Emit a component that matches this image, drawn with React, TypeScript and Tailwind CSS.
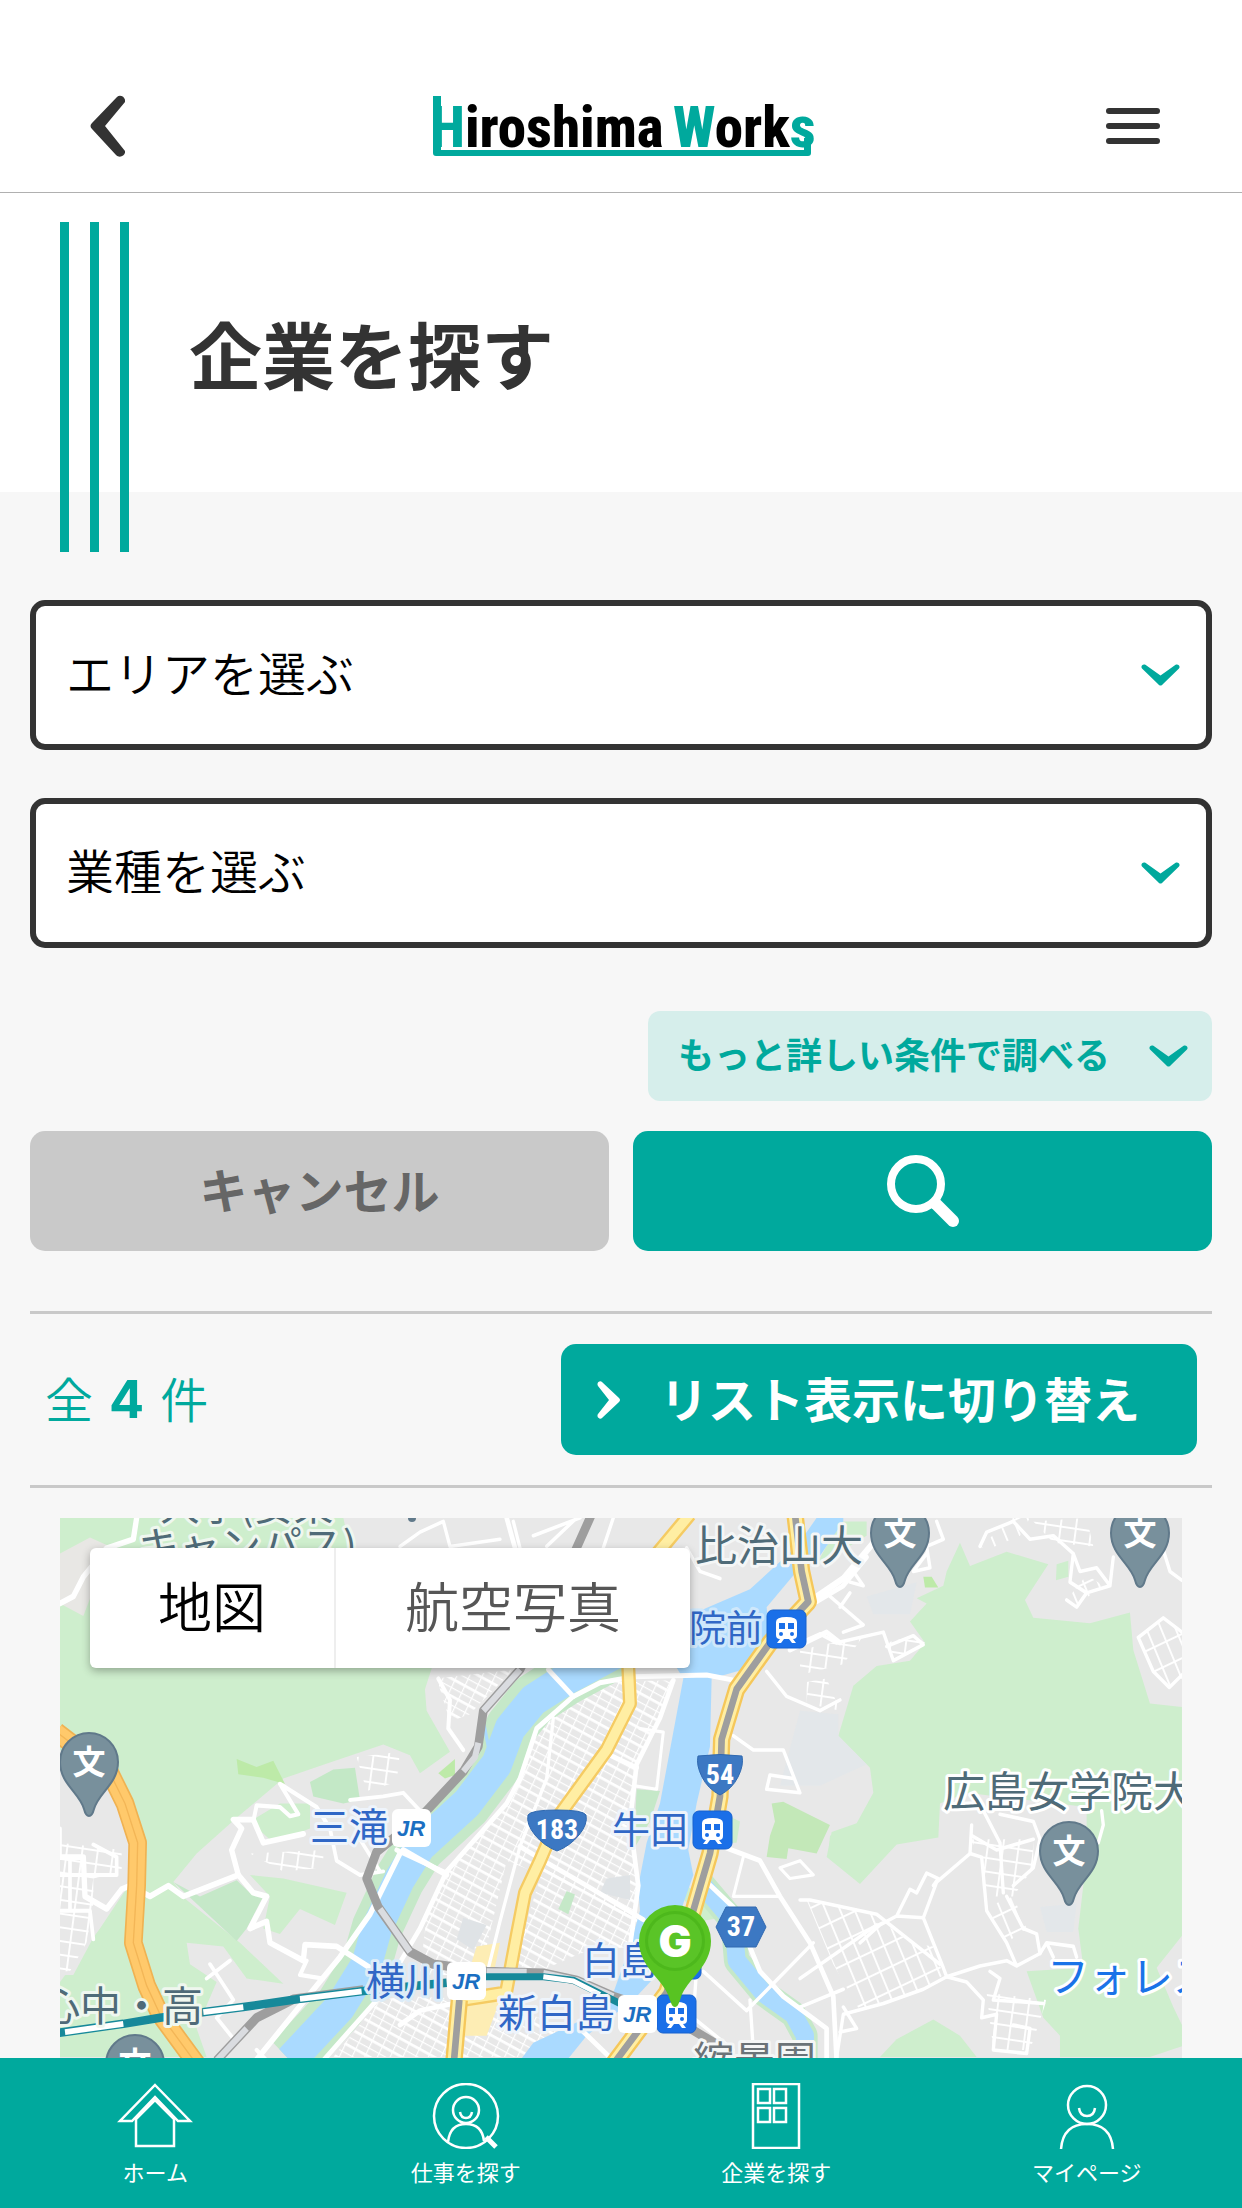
import { useState, type ReactNode } from "react";
import clsx from "clsx";

function Chevron({ className }: { className?: string }) {
    return (
        <svg viewBox="0 0 39 22" className={className} fill="currentColor" aria-hidden="true">
            <path d="M1 4.4C-.6 2.6 1.6-.6 4.4.8L19.5 11.6 34.6.8c2.8-1.4 5 1.8 3.4 3.6L21 20.9c-1 .9-2 .9-3 0Z" />
        </svg>
    );
}

function Logo() {
    return (
        <svg viewBox="0 0 378 60" className="w-[378px] h-[60px] overflow-visible" role="img" aria-label="Hiroshima Works">
            <g
                fontFamily="'Roboto Condensed', 'Liberation Sans Narrow', 'Liberation Sans', sans-serif"
                fontWeight="800"
                fontSize="57"
            >
                <text x="-3" y="51">
                    <tspan fill="#00a99d">H</tspan>
                    <tspan fill="#000">iroshima</tspan>
                </text>
                <text x="240" y="51">
                    <tspan fill="#00a99d">W</tspan>
                    <tspan fill="#000">ork</tspan>
                    <tspan fill="#00a99d">s</tspan>
                </text>
            </g>
            <path d="M0 0H8V54H371V42H378V57Q378 60 375 60H3Q0 60 0 57Z" fill="#00a99d" />
        </svg>
    );
}

function SelectBox({ id, label, options }: { id: string; label: string; options: string[] }) {
    return (
        <div className="relative">
            <label htmlFor={id} className="sr-only">{label}</label>
            <select
                id={id}
                className="block w-full h-[150px] appearance-none rounded-[15px] border-[6px] border-[#333] bg-white pl-[30px] pr-20 pb-2 text-5xl font-[350] text-black"
            >
                <option value="">{label}</option>
                {options.map((o) => (
                    <option key={o}>{o}</option>
                ))}
            </select>
            <Chevron className="pointer-events-none absolute right-8 top-16 w-[39px] text-[#00a99d]" />
        </div>
    );
}

/* ---------- map ---------- */

function SchoolPin({ x, y }: { x: number; y: number }) {
    return (
        <g transform={`translate(${x} ${y})`}>
            <path
                d="M0 54C-3 54-4 51-5 47C-9 31-29 22-29 0A29 29 0 0 1 29 0C29 22 9 31 5 47C4 51 3 54 0 54Z"
                fill="#78909c"
                stroke="#60798a"
                strokeWidth="2"
            />
            <text y="12" textAnchor="middle" fontSize="33" fontWeight="700" fill="#fff">文</text>
        </g>
    );
}

function TrainIcon({ x, y }: { x: number; y: number }) {
    return (
        <g transform={`translate(${x} ${y})`}>
            <rect width="39" height="38" rx="6" fill="#1a6fe8" stroke="#1662cf" />
            <path d="M9 12Q9 7 19.500 7T30 12V25Q30 29 26 29L29 33H25L22 29H17L14 33H10L13 29Q9 29 9 25Z" fill="#fff" />
            <path d="M12 13H18V19H12ZM21 13H27V19H21Z" fill="#1a6fe8" />
            <circle cx="14" cy="24" r="2" fill="#1a6fe8" />
            <circle cx="25" cy="24" r="2" fill="#1a6fe8" />
        </g>
    );
}

function JrIcon({ x, y }: { x: number; y: number }) {
    return (
        <g transform={`translate(${x} ${y})`}>
            <rect width="39" height="38" rx="6" fill="#fff" />
            <text
                x="19"
                y="27"
                textAnchor="middle"
                fontFamily="'Liberation Sans', sans-serif"
                fontStyle="italic"
                fontWeight="700"
                fontSize="22"
                fill="#1b6fc2"
            >
                JR
            </text>
        </g>
    );
}

function RouteBadge({ x, y, no, d }: { x: number; y: number; no: string; d: string }) {
    return (
        <g transform={`translate(${x} ${y})`}>
            <path d={d} fill="#3c78c3" stroke="#3069b0" strokeWidth="1" />
            <text
                y="9"
                textAnchor="middle"
                fontFamily="'Roboto Condensed', Roboto, sans-serif"
                fontWeight="700"
                fontSize="28"
                fill="#fff"
            >
                {no}
            </text>
        </g>
    );
}

const labels = [
    { x: 100, y: 2, size: 40, fill: "#4f6b78", halo: "#eff7ef", text: "大学(安東" },
    { x: 78, y: 43, size: 41, fill: "#4f6b78", halo: "#eff7ef", text: "キャンパス)" },
    { x: 635, y: 43, size: 42, fill: "#4f6b78", halo: "#f4f6f6", text: "比治山大" },
    { x: 629, y: 124, size: 37, fill: "#3067c6", halo: "#cfe8fb", text: "院前" },
    { x: 552, y: 325, size: 38, fill: "#3067c6", halo: "#eef4fb", text: "牛田" },
    { x: 250, y: 323, size: 39, fill: "#3067c6", halo: "#eef4fb", text: "三滝" },
    { x: 306, y: 477, size: 39, fill: "#3067c6", halo: "#dcecf8", text: "横川" },
    { x: 522, y: 456, size: 38, fill: "#3067c6", halo: "#eef4fb", text: "白島" },
    { x: 438, y: 509, size: 39, fill: "#3067c6", halo: "#eef4fb", text: "新白島" },
    { x: 883, y: 289, size: 42, fill: "#4f6b78", halo: "#fff", text: "広島女学院大" },
    { x: 987, y: 474, size: 42, fill: "#1a73e8", halo: "#fff", text: "フォレスト" },
    { x: 633, y: 558, size: 41, fill: "#6b7378", halo: "#f4f6f6", text: "縮景園" },
    { x: -21, y: 503, size: 41, fill: "#4f6b78", halo: "#eff7ef", text: "心中・高" },
];

const shield54 = "M-22 -19Q0 -22 22 -19Q24 -10 18 2Q12 14 0 20Q-12 14 -18 2Q-24 -10 -22 -19Z";
const shield183 = "M-29 -15Q-26 -20 0 -20T29 -15Q31 -6 22 5Q13 16 0 21Q-13 16 -22 5Q-31 -6 -29 -15Z";
const hexagon = "M-15 -20H15L25 0L15 20H-15L-25 0Z";

// Three survey sheets, each drawn in its own units, laid side by side
const WEST = "matrix(.3333 0 0 .3571 -10 -18)";
const MID = "matrix(.3333 0 0 .3571 340 -18)";
const EAST = "matrix(.3333 0 0 .3571 740 -18)";

function MapCanvas() {
    return (
        <svg
            viewBox="0 0 1122 540"
            preserveAspectRatio="xMidYMin slice"
            className="absolute inset-0 w-full h-full"
            role="img"
            aria-label="広島市の地図"
        >
            <defs>
                <pattern id="blocks" width="34" height="44" patternUnits="userSpaceOnUse" patternTransform="rotate(27)">
                    <path d="M0 0H34M0 0V44M0 23H34" stroke="#fff" strokeWidth="7" fill="none" />
                </pattern>
                <pattern id="blocksEast" width="40" height="62" patternUnits="userSpaceOnUse" patternTransform="rotate(-24)">
                    <path d="M0 0H40M0 0V62" stroke="#fff" strokeWidth="11" fill="none" />
                </pattern>
                <pattern id="blocksFlat" width="46" height="38" patternUnits="userSpaceOnUse" patternTransform="rotate(8)">
                    <path d="M0 0H46M0 0V38" stroke="#fff" strokeWidth="11" fill="none" />
                </pattern>
            </defs>

            <rect width="1122" height="540" fill="#e8e8e8" />

            {/* woodland */}
            <g fill="#ceeecd">
                <g transform={WEST}>
                    <path d="M30 50H880L900 134L1170 400L1125 530L1130 590L1200 705L1110 765L1080 715L1000 685L840 735L700 780L560 890L440 990L370 1070L410 1120L570 1240L700 1355L590 1340L520 1250L410 1240L420 1300L500 1350L440 1480L470 1560H30V1350L150 1200L235 1080L265 960L205 800L30 700Z" />
                    <path d="M600 1050L700 1060L890 1100L855 1190L750 1145L690 1215L640 1200L660 1110Z" />
                    <path d="M600 900L690 850L780 850L780 920L670 960Z" />
                    <path d="M780 790L850 755L915 750L930 840L880 850L790 830Z" fill="#c3e8c6" />
                    <path d="M560 725L620 748L670 730L705 795L640 778L565 768Z" fill="#bdeaa8" />
                    <path d="M1165 765L1215 725V770L1185 780Z" fill="#bdeaa8" />
                    <path d="M370 1070L450 1110L560 1065L600 1100L640 1110L590 1200L560 1235Z" fill="#c5e8c8" />
                    <path d="M30 150L120 105L180 130L100 325L30 290Z" fill="#e8e7e4" />
                    <path d="M30 780L180 780L235 870L250 960L235 1080L150 1190L70 1330H30Z" fill="#e8e8e8" />
                </g>
                <g transform={MID}>
                    <path d="M710 810L780 815L750 900L700 980Z" fill="#c5e8c8" />
                    <path d="M1115 850L1150 845L1290 910L1250 990L1165 975L1160 1005L1100 1000L1110 940L1125 900Z" fill="#c3e8b8" />
                    <path d="M1290 940L1340 920V1020L1285 1000Z" />
                    <path d="M975 880L1020 900L1010 960L970 960Z" />
                    <path d="M830 1090L860 1080L920 1120L960 1170L900 1180Z" />
                    <path d="M1240 190L1400 100V60H1320L1250 180Z" />
                </g>
                <g transform={EAST}>
                    <path d="M480 120L510 185L620 145L745 180L675 280L700 330L870 345L990 315L1000 420L1050 570L1146 580V1220L1070 1310L1120 1420L1146 1470V1530L1050 1560H780V1500L730 1450L680 1320L850 1310L835 1200L860 1000L860 860L500 820L420 850L415 945L290 965L180 1075L80 1000L95 930L170 905L220 820L210 750L115 660L160 520L230 465L330 450L375 400L330 340L380 290L350 275L430 240L440 200Z" />
                    <path d="M240 1560L290 1510L400 1455L480 1500L530 1560Z" />
                    <path d="M770 180L805 170V215L768 225Z" />
                    <path d="M370 215L395 215L415 245L375 245Z" fill="#bdeaa8" />
                    <path d="M200 270L350 230L330 320L220 320Z" fill="#e3e7ea" />
                    <path d="M0 590L115 600V660L200 740L60 800L-60 800Z" fill="#e3e7ea" />
                    <path d="M720 1140L830 1130L820 1210H740Z" fill="#e3e7ea" />
                </g>
            </g>

            {/* city blocks */}
            <g transform={WEST}>
                <path d="M30 960L215 980V1040L130 1060L130 1130L110 1240L60 1320H30Z" fill="url(#blocksFlat)" />
                <path d="M600 990L820 980V1030L700 1040Z" fill="url(#blocksFlat)" />
                <path d="M920 720L1050 705L1040 790L950 815Z" fill="url(#blocksFlat)" />
            </g>
            <g transform={MID}>
                <path d="M600 510L820 505L780 610L710 740L690 900L720 1080L690 1180L560 1100L320 1010L240 1330L60 1330L80 1160L140 1040L330 850L410 640Z" fill="url(#blocks)" />
                <path d="M430 1030L720 1170L690 1250L540 1270L420 1320L340 1300Z" fill="url(#blocks)" />
                <path d="M20 1390L280 1400L500 1480L400 1560H-200L-60 1400Z" fill="url(#blocks)" />
                <path d="M110 500L340 475L240 570L210 600L150 620Z" fill="url(#blocks)" />
                <path d="M500 1095L525 1105L505 1160L475 1145Z" fill="#c5e8c8" />
                <path d="M620 1060L690 1050L690 1120L600 1100Z" fill="#dfe3e6" />
                <path d="M190 1170L260 1190L220 1260L170 1230Z" fill="#dfe3e6" />
                <path d="M230 1250L300 1240L280 1330L200 1340ZM150 1410L300 1400L260 1500L150 1500Z" fill="#fdedb4" />
            </g>
            <g transform={EAST}>
                <path d="M20 1120L220 1160L330 1240L400 1250L430 1330L370 1370L180 1430L100 1300Z" fill="url(#blocksEast)" />
                <path d="M510 950L700 950L700 1030L640 1110H550L545 1000Z" fill="url(#blocksFlat)" />
                <path d="M560 1380L740 1400L690 1540L580 1540Z" fill="url(#blocksFlat)" />
                <path d="M560 1140L640 1110L680 1200L620 1240Z" fill="url(#blocksEast)" />
                <path d="M1015 385L1090 330L1146 370V500L1108 525L1060 480Z" fill="url(#blocksEast)" />
                <path d="M700 60L860 50L880 130L760 120Z" fill="url(#blocksFlat)" />
                <path d="M540 130L640 50H690L660 100L560 140Z" fill="url(#blocksEast)" />
                <path d="M800 280L860 210L910 240L820 300Z" fill="url(#blocksEast)" />
                <path d="M0 420L190 380L130 460L0 490ZM20 510L80 500L120 590L20 570ZM260 400L340 380L375 400L290 450Z" fill="url(#blocksFlat)" />
            </g>

            {/* rivers */}
            <g transform={MID} fill="none" strokeLinejoin="round">
                <path d="M660 420L500 500L400 560L330 640L290 740L200 850L60 970L0 1060L-70 1200L-100 1300L-180 1420L-330 1570" stroke="#c5e8c8" strokeWidth="150" />
                <path d="M660 420L500 500L400 560L330 640L290 740L200 850L60 970L0 1060L-70 1200L-100 1300L-180 1420L-330 1570" stroke="#aadaff" strokeWidth="92" />
                <path d="M265 690L250 620" stroke="#aadaff" strokeWidth="10" />
                <path
                    d="M1330 50H1250L1190 130L1050 250L900 310L870 380L830 470L850 500L780 850L740 960L715 1080L720 1150L690 1250L640 1380L560 1450L400 1520L360 1570H500L560 1500L700 1400L800 1300L850 1130L880 1050L865 980L890 850L930 690L935 500L1050 470L1110 400L1100 300L1190 200L1250 170L1330 60Z"
                    fill="#aadaff"
                />
                <path d="M905 1075L1000 1180L1010 1290L1090 1380L1180 1440L1215 1500V1570" stroke="#c5e8c8" strokeWidth="76" />
                <path d="M905 1075L1000 1180L1010 1290L1090 1380L1180 1440L1215 1500V1570" stroke="#aadaff" strokeWidth="54" />
            </g>

            {/* local roads */}
            <g fill="none" stroke="#fff" strokeLinejoin="round" strokeLinecap="round">
                <g transform={WEST} strokeWidth="16">
                    <path d="M260 50L250 110L170 135L100 215L70 270L30 290" />
                    <path d="M30 1000H100L105 1110L170 1145L215 1090L240 1080L300 1110L355 1080L400 1110L565 1050L545 980L575 920L550 895H610L640 960L760 935" />
                    <path d="M565 1050L610 1100L650 1110L600 1200L650 1180L660 1240L760 1290L765 1245L860 1250L960 1310" />
                    <path d="M610 900L620 855L690 860L720 885L745 880L690 795L800 860L840 920" strokeWidth="12" />
                    <path d="M1050 990L960 1160L870 1280L730 1440L600 1590" />
                    <path d="M1060 980L1190 1050" />
                    <path d="M900 840L1000 830L1060 820L1110 870M840 920L860 1010L930 1050L1000 1040M930 950L990 1040" strokeWidth="11" />
                    <path d="M480 1300L550 1400L500 1450L560 1520M470 1340L540 1290" strokeWidth="11" />
                    <path d="M30 920V1000M30 1150H120L130 1230M60 1010V1150M30 1050H200V1000L130 965" strokeWidth="11" />
                    <path d="M620 1540L680 1600M770 1290L750 1330L820 1340" strokeWidth="12" />
                    <path d="M1165 500L1200 560L1195 640L1240 700" strokeWidth="12" />
                </g>
                <g transform={MID} strokeWidth="14">
                    <path d="M445 475L520 550M520 550L600 512L700 495L920 490L1020 508" />
                    <path d="M520 550L410 640L360 780L320 850L140 1040L60 1200L-60 1390L-240 1580" />
                    <path d="M460 610L440 780L360 970L300 1180L260 1330" strokeWidth="10" />
                    <path d="M820 505L780 610L710 740L690 900L715 1080L690 1250" />
                    <path d="M620 710L710 750M360 970L430 1010L560 1080L730 1175M320 50L345 134" />
                    <path d="M-10 980L140 1045" />
                    <path d="M980 975L1080 1010L1140 1110L1230 1240L1300 1390L1310 1570" />
                    <path d="M915 1065L1000 1140L1080 1320L1150 1390L1280 1480V1570" />
                    <path d="M910 1320L1040 1430L1240 1240M1050 1400L1060 1540M890 1310L880 1450L1000 1540" strokeWidth="10" />
                    <path d="M0 1470L60 1430L260 1390M540 1480L640 1570" />
                    <path d="M1100 480L1160 550L1260 590L1320 560M1000 660L1060 700L1150 700L1200 820L1100 810L1110 770L1180 780" strokeWidth="10" />
                    <path d="M1240 290L1330 240L1400 160M1170 420L1280 370L1320 400" />
                    <path d="M0 130L60 90L130 60L150 130L300 110M340 60L360 134M440 130L530 50M640 50L610 134M400 100L540 50M860 134L900 200L960 220" strokeWidth="10" />
                    <path d="M720 640L790 650L770 810L700 800M1030 1000L1000 1110L1140 1110M1140 1030L1200 1010L1240 1050L1170 1060Z" strokeWidth="9" />
                </g>
                <g transform={EAST} strokeWidth="10">
                    <path d="M35 280L130 220L220 120" strokeWidth="18" />
                    <path d="M90 270L140 310L190 350L130 370M150 260L120 300M150 230L190 240L160 200" />
                    <path d="M0 400L60 375L110 400L250 370L280 450L370 405L340 380L260 410" />
                    <path d="M410 60L430 110L380 130L390 190L340 200L380 150" />
                    <path d="M540 130L560 90L640 60L690 110L760 100L820 150L810 230L860 260L830 300L800 280M820 150L840 200L890 190L930 240L860 260M940 160L930 240" />
                    <path d="M1090 140L1110 200L1146 225" />
                    <path d="M1015 385L1090 330L1146 370M1015 385L1060 480L1108 525L1146 490" />
                    <path d="M515 910L510 990L410 1070L370 1170L290 1165L240 1190L180 1240M290 1165L330 1090L350 1100L380 1045L415 1060L400 1080" />
                    <path d="M370 1170L430 1310L440 1335L540 1305L620 1290L650 1305L720 1270L710 1215L670 1200L620 1110M650 1305L620 1240L560 1150L545 1000L510 990" />
                    <path d="M550 870L600 960L610 1100M600 880L700 900L720 950L700 1030L640 1080M515 940L590 980L700 950" />
                    <path d="M720 1270L740 1240L820 1250L830 1280M740 1240L760 1280" />
                    <path d="M440 1335L500 1350L550 1400L545 1450L590 1440L580 1540L680 1550L690 1480L640 1470M570 1320L600 1340L580 1400L730 1410" />
                    <path d="M0 1120L30 1120L230 1160L420 1300M230 1190L0 1340M0 1420L130 1370M110 1560L130 1440L250 1410L370 1370L440 1335M120 1490L170 1480L130 1420" />
                    <path d="M905 870L910 910L895 960" />
                </g>
            </g>

            {/* highways */}
            <g fill="none" strokeLinejoin="round">
                <g transform={WEST}>
                    <path d="M20 650L180 765L225 850L263 960L260 1080L250 1240L290 1360L330 1440L440 1580" stroke="#f0b252" strokeWidth="56" />
                    <path d="M20 650L180 765L225 850L263 960L260 1080L250 1240L290 1360L330 1440L440 1580" stroke="#ffc96b" strokeWidth="46" />
                    <path d="M20 650L180 765L225 850L263 960L260 1080L250 1240L290 1360L330 1440L440 1580" stroke="#f3b657" strokeWidth="4" />
                </g>
                <g transform={MID}>
                    <path d="M870 40L700 230L685 470L690 570L620 700L480 880L420 1010L375 1100L350 1220L318 1380L180 1400" stroke="#f5cb63" strokeWidth="42" />
                    <path d="M870 40L700 230L685 470L690 570L620 700L480 880L420 1010L375 1100L350 1220L318 1380L180 1400" stroke="#ffeea3" strokeWidth="28" />
                    <path d="M1185 40L1205 200L1225 285L1110 400L1010 530L965 670L960 830L930 990L880 1150L800 1380L640 1580M178 1400L162 1570" stroke="#f5c75a" strokeWidth="52" />
                    <path d="M1185 40L1205 200L1225 285L1110 400L1010 530L965 670L960 830L930 990L880 1150L800 1380L640 1580M178 1400L162 1570" stroke="#ffeea3" strokeWidth="38" />
                    <path d="M1185 40L1205 200L1225 285L1110 400L1010 530L965 670L960 830L930 990L880 1150L800 1380L640 1580M178 1400L162 1570" stroke="#9e9e9e" strokeWidth="20" />
                </g>
            </g>

            {/* railways */}
            <g fill="none" strokeLinejoin="round">
                <g transform={MID}>
                    <path d="M575 40L530 134L360 475L250 590L235 690L190 760L70 880L-70 985L-100 1060L-65 1140L30 1265L100 1300L260 1320L430 1325L530 1345L640 1390L800 1440L960 1530" stroke="#9e9e9e" strokeWidth="26" />
                    <path d="M360 475L250 590M235 680L225 720L190 760M-60 1145L30 1265M260 1320L380 1322M430 1325L530 1345L640 1390" stroke="#dadce0" strokeWidth="18" />
                    <path d="M-110 1372L-320 1398L-430 1450L-550 1570" stroke="#9e9e9e" strokeWidth="26" />
                    <path d="M-110 1372L-320 1398M-460 1480L-550 1570" stroke="#dadce0" strokeWidth="18" />
                </g>
                <g transform={WEST}>
                    <path d="M20 1493L220 1467L330 1450L580 1420L750 1397L940 1375L1190 1352" stroke="#17899a" strokeWidth="24" />
                    <path d="M45 1490L220 1467M460 1434L580 1420M750 1397L935 1376" stroke="#fff" strokeWidth="16" />
                </g>
                <g transform={MID}>
                    <path d="M255 1335H430L520 1345L660 1410" stroke="#17899a" strokeWidth="20" />
                    <path d="M430 1335L520 1347L600 1385" stroke="#fff" strokeWidth="14" />
                </g>
            </g>

            {/* names and markers */}
            {labels.map((l) => (
                <text
                    key={l.text}
                    x={l.x}
                    y={l.y}
                    fontSize={l.size}
                    fill={l.fill}
                    stroke={l.halo}
                    strokeWidth="6"
                    strokeLinejoin="round"
                    paintOrder="stroke"
                >
                    {l.text}
                </text>
            ))}
            <circle cx="352" cy="0" r="4" fill="#60798a" />
            <SchoolPin x={29} y={244} />
            <SchoolPin x={1009} y={333} />
            <SchoolPin x={840} y={15} />
            <SchoolPin x={1080} y={15} />
            <SchoolPin x={75} y={546} />
            <TrainIcon x={707} y={92} />
            <TrainIcon x={633} y={293} />
            <TrainIcon x={602} y={423} />
            <TrainIcon x={597} y={477} />
            <JrIcon x={332} y={291} />
            <JrIcon x={387} y={444} />
            <JrIcon x={558} y={477} />
            <RouteBadge x={660} y={257} no="54" d={shield54} />
            <RouteBadge x={497} y={312} no="183" d={shield183} />
            <RouteBadge x={681} y={409} no="37" d={hexagon} />
            <g transform="translate(615 423)">
                <path d="M0 66C-3 66-4 62-6 56C-12 38-36 26-36 0A36 36 0 0 1 36 0C36 26 12 38 6 56C4 62 3 66 0 66Z" fill="#58c322" />
                <circle r="30" fill="#4db81c" />
                <circle r="27" fill="#5ac427" />
                <text y="16" textAnchor="middle" fontFamily="Inter, sans-serif" fontWeight="900" fontSize="44" fill="#fff">G</text>
            </g>
        </svg>
    );
}

/* ---------- bottom navigation ---------- */

const navItems: { label: string; href: string; icon: ReactNode }[] = [
    {
        label: "ホーム",
        href: "#home",
        icon: (
            <>
                <path d="M38 2L73 38H61L38 14L15 38H3Z" />
                <path d="M19 36V63H57V36L38 17Z" />
            </>
        ),
    },
    {
        label: "仕事を探す",
        href: "#jobs",
        icon: (
            <>
                <circle cx="38" cy="33" r="32" />
                <circle cx="38" cy="27" r="13" />
                <path d="M32 29Q33 35 38 35T44 29M20 59Q22 41 38 41T56 58" />
                <path d="M58 54L68 64" strokeWidth="5" />
            </>
        ),
    },
    {
        label: "企業を探す",
        href: "#companies",
        icon: (
            <>
                <path d="M15 1H61V65H15Z" />
                <path d="M20 6H32V20H20ZM36 6H48V20H36ZM20 25H32V39H20ZM36 25H48V39H36Z" />
            </>
        ),
    },
    {
        label: "マイページ",
        href: "#mypage",
        icon: (
            <>
                <circle cx="38" cy="22" r="19" />
                <path d="M30 25Q31 33 38 33T46 25M12 66Q14 41 38 41T64 66" />
            </>
        ),
    },
];

export default function App() {
    const [mapType, setMapType] = useState<"map" | "photo">("map");

    return (
        <div className="flex min-h-screen flex-col bg-[#f7f7f7] font-['Noto_Sans_CJK_JP',sans-serif] text-[#333]">
            <header className="flex h-[193px] items-center justify-between border-b border-[#b0b0b0] bg-white pt-[60px] pl-[78px] pr-[82px]">
                <button type="button" aria-label="戻る" className="p-3">
                    <svg viewBox="0 0 35 62" className="w-[35px] h-[62px]" fill="currentColor">
                        <path d="M27 2C30-1 36 2 35 7L15 31L35 56C36 60 30 64 26 60L2 34Q-1 31 2 28Z" />
                    </svg>
                </button>
                <a href="#top"><Logo /></a>
                <button type="button" aria-label="メニュー" className="flex flex-col gap-[9px]">
                    <span className="h-1.5 w-[54px] rounded-full bg-[#333]" />
                    <span className="h-1.5 w-[54px] rounded-full bg-[#333]" />
                    <span className="h-1.5 w-[54px] rounded-full bg-[#333]" />
                </button>
            </header>

            <main className="flex flex-1 flex-col">
                <section className="flex h-[299px] items-start bg-white px-[60px] pt-[29px]">
                    <div className="flex h-[330px] gap-[21px]" aria-hidden="true">
                        <span className="w-[9px] bg-[#00a99d]" />
                        <span className="w-[9px] bg-[#00a99d]" />
                        <span className="w-[9px] bg-[#00a99d]" />
                    </div>
                    <h1 className="flex h-[270px] items-center pb-2 pl-[60px] text-[73px] font-bold">企業を探す</h1>
                </section>

                <form className="flex flex-col px-[30px] pt-[108px]" onSubmit={(e) => e.preventDefault()}>
                    <div className="flex flex-col gap-12">
                        <SelectBox id="area" label="エリアを選ぶ" options={["広島市", "呉市", "福山市"]} />
                        <SelectBox id="industry" label="業種を選ぶ" options={["製造業", "情報通信業", "サービス業"]} />
                    </div>
                    <button
                        type="button"
                        className="mt-[63px] flex h-[90px] w-[564px] items-center justify-between self-end rounded-xl bg-[#d6eeeb] pl-[30px] pr-6 text-4xl font-bold text-[#00a99d]"
                    >
                        <span className="pb-1.5">もっと詳しい条件で調べる</span>
                        <Chevron className="w-[39px]" />
                    </button>
                    <div className="mt-[30px] grid grid-cols-2 gap-6">
                        <button type="reset" className="h-[120px] rounded-[15px] bg-[#c9c9c9] pb-1.5 text-5xl font-bold text-[#666]">
                            キャンセル
                        </button>
                        <button
                            type="submit"
                            aria-label="検索"
                            className="flex h-[120px] items-center justify-center rounded-[15px] bg-[#00a99d] text-white"
                        >
                            <svg viewBox="0 0 72 72" className="w-[72px] h-[72px]" fill="none" stroke="currentColor" strokeLinecap="round">
                                <circle cx="29" cy="29" r="25" strokeWidth="8" />
                                <path d="M49 49L66 66" strokeWidth="12" />
                            </svg>
                        </button>
                    </div>
                </form>

                <div className="mx-[30px] mt-[60px] flex h-[177px] items-center justify-between border-y-[3px] border-[#c9c9c9] px-[15px]">
                    <p className="flex items-center gap-4 text-5xl font-[350] text-[#00a99d]">
                        <span className="pb-1.5">全</span>
                        <strong className="font-['Inter',sans-serif] text-[52px] font-bold">4</strong>
                        <span className="pb-1.5">件</span>
                    </p>
                    <button
                        type="button"
                        className="flex h-[111px] w-[636px] items-center gap-[39px] rounded-[15px] bg-[#00a99d] pl-9 text-5xl font-bold text-white"
                    >
                        <svg viewBox="0 0 24 38" className="w-6 h-[38px]" fill="currentColor" aria-hidden="true">
                            <path d="M5 1C3-1-1 2 1 5L12 19L1 33C-1 36 3 39 5 37L22 21Q24 19 22 17Z" />
                        </svg>
                        <span className="pb-1.5">リスト表示に切り替え</span>
                    </button>
                </div>

                <section className="relative mx-[60px] mt-[30px] min-h-[540px] flex-1 overflow-hidden" aria-label="地図">
                    <MapCanvas />
                    <div className="absolute left-[30px] top-[30px] flex rounded-md bg-white text-[54px] font-[350] shadow-[0_3px_9px_rgba(0,0,0,0.3)]">
                        <button
                            type="button"
                            onClick={() => setMapType("map")}
                            className={clsx("h-[120px] w-[246px] border-r-2 border-[#eee] pb-2", mapType === "map" ? "text-black" : "text-[#565656]")}
                        >
                            地図
                        </button>
                        <button
                            type="button"
                            onClick={() => setMapType("photo")}
                            className={clsx("h-[120px] w-[354px] pb-2", mapType === "photo" ? "text-black" : "text-[#565656]")}
                        >
                            航空写真
                        </button>
                    </div>
                </section>
            </main>

            <nav className="sticky bottom-0 grid h-[150px] grid-cols-4 bg-[#00a99d] text-white">
                {navItems.map((item) => (
                    <a key={item.label} href={item.href} className="flex flex-col items-center gap-1 pt-[25px] text-[22px] leading-9">
                        <svg viewBox="0 0 76 66" className="h-[66px] w-[76px]" fill="none" stroke="currentColor" strokeWidth="2.500">
                            {item.icon}
                        </svg>
                        {item.label}
                    </a>
                ))}
            </nav>
        </div>
    );
}
